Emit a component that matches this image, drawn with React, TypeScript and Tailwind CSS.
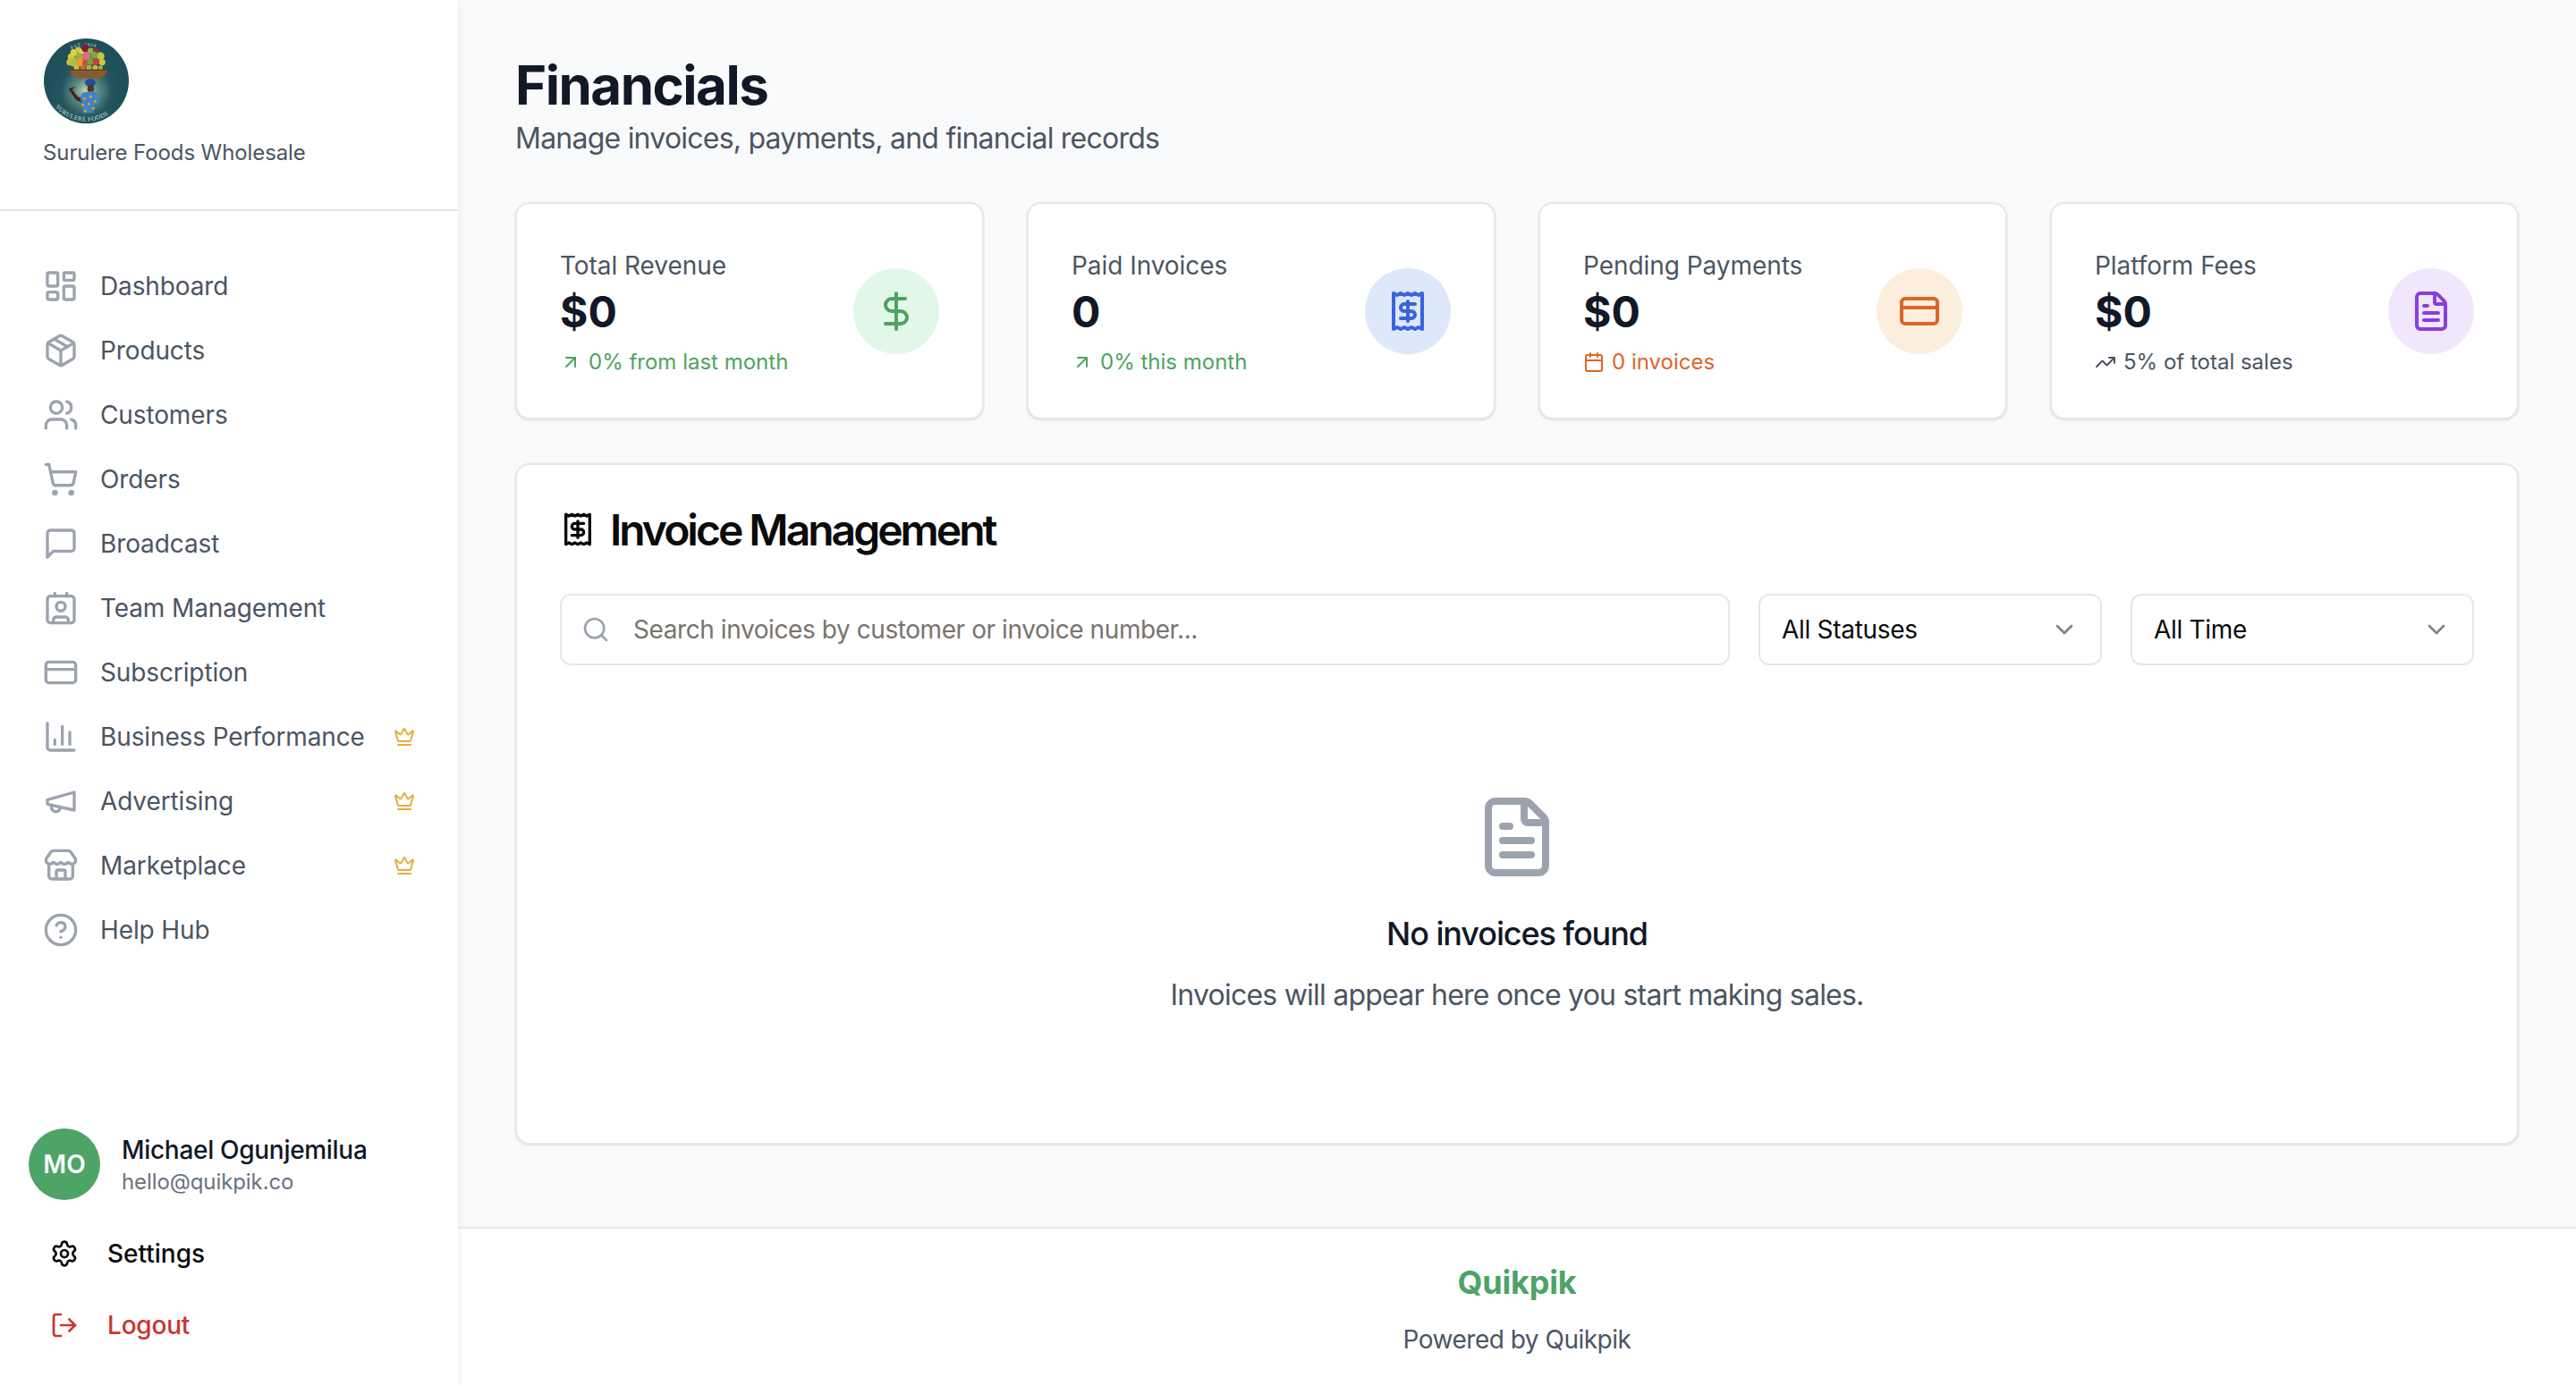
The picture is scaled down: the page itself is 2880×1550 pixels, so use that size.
import React from "react";
import {
  LayoutDashboard,
  Package,
  Users,
  ShoppingCart,
  Contact,
  CreditCard,
  ChartColumn,
  Store,
  CircleHelp,
  Crown,
  Settings,
  LogOut,
  DollarSign,
  Receipt,
  FileText,
  ArrowUpRight,
  Calendar,
  TrendingUp,
  Search,
  ChevronDown,
} from "lucide-react";

function MessageIcon({ className }: { className?: string }) {
  return (
    <svg className={className} viewBox="0 0 24 24" fill="none" stroke="currentColor" strokeWidth={2} strokeLinecap="round" strokeLinejoin="round">
      <path d="M21 15a2 2 0 0 1-2 2H7l-4 4V5a2 2 0 0 1 2-2h14a2 2 0 0 1 2 2z" />
    </svg>
  );
}

function MegaphoneIcon({ className }: { className?: string }) {
  return (
    <svg className={className} viewBox="0 0 24 24" fill="none" stroke="currentColor" strokeWidth={2} strokeLinecap="round" strokeLinejoin="round">
      <path d="m3 11 18-5v12L3 14v-3z" />
      <path d="M11.6 16.8a3 3 0 1 1-5.8-1.6" />
    </svg>
  );
}

// the shop's round logo, drawn by hand
function Logo() {
  const fruits: [number, number, number, string][] = [
    [29, 27, 3.5, "#c9c23c"], [31, 21, 4, "#d9c53a"], [34, 16, 4, "#e3cf45"], [39, 13, 3.5, "#c9c23c"], [43, 15, 3.5, "#e4d24e"],
    [34, 27, 5, "#a9c23f"], [40, 21, 4.5, "#8fb548"], [47, 11, 4.5, "#7c1f2a"], [53, 14, 3.5, "#8fb548"], [59, 14, 3.5, "#9a2b3a"],
    [64, 20, 4.5, "#b7cf3f"], [57, 19, 4, "#77a845"], [48, 20, 5, "#dd6f78"], [41, 27, 4.5, "#ee9a35"], [47, 28, 3.5, "#c4543a"],
    [53, 26, 4, "#7aa03a"], [59, 26, 4, "#b5464a"], [66, 27, 3.5, "#d8c63d"], [37, 33, 3, "#c7c23c"], [44, 33, 3, "#b5782f"],
    [51, 33, 3, "#a7b83e"], [58, 33, 3, "#d9b33b"], [64, 33, 2.6, "#9ab43f"],
  ];
  const dots: [number, number][] = [[46, 68], [53, 66], [58, 71], [44, 75], [51, 74], [56, 79], [47, 82]];
  return (
    <svg className="ml-px h-[95px] w-[95px]" viewBox="0 0 96 96">
      <defs>
        <radialGradient id="logoGlow" cx="48" cy="60" r="44" gradientUnits="userSpaceOnUse">
          <stop offset="0" stopColor="#c9dab8" />
          <stop offset="0.3" stopColor="#5e8d84" />
          <stop offset="0.65" stopColor="#24555e" />
          <stop offset="1" stopColor="#1f4f58" />
        </radialGradient>
        <path id="logoTop" d="M 20 20 A 40 40 0 0 1 76 20" />
        <path id="logoBottom" d="M 10 73 A 45.5 45.5 0 0 0 86 73" />
      </defs>
      <circle cx="48" cy="48" r="48" fill="url(#logoGlow)" />
      <text fontFamily="Liberation Serif, serif" fontSize="5.500" fill="#cfe0d8" letterSpacing="0.6">
        <textPath href="#logoTop" startOffset="22%">EST. 2024</textPath>
      </text>
      <text fontFamily="Liberation Serif, serif" fontSize="7" fill="#cfe0d8" letterSpacing="0.4">
        <textPath href="#logoBottom" startOffset="6%">SURULERE FOODS</textPath>
      </text>
      {fruits.map(([cx, cy, r, fill], i) => (
        <circle key={i} cx={cx} cy={cy} r={r} fill={fill} />
      ))}
      <path d="M29 35h43c-1 6-6 9-12 10H41c-6-1-11-4-12-10z" fill="#8a5a2e" />
      <path d="M29 35h43v1.5H29z" fill="#5f3d20" />
      <ellipse cx="52.5" cy="50" rx="6" ry="4.5" fill="#1f4fa0" />
      <ellipse cx="53" cy="57" rx="3.8" ry="4.6" fill="#5a3020" />
      <path d="M28 57l3-1.500 5-1-4 3 6 8 5 2v5l-7-3z" fill="#4a2418" />
      <path d="M43 62c5-2 12-3 16-1 3 2 4 8 3 13l-5 1-1 9H44l0-11-3-4z" fill="#3d86c6" />
      {dots.map(([cx, cy], i) => (
        <circle key={i} cx={cx} cy={cy} r="1.500" fill="#e39a35" />
      ))}
    </svg>
  );
}

const navItems = [
  { label: "Dashboard", icon: LayoutDashboard },
  { label: "Products", icon: Package },
  { label: "Customers", icon: Users },
  { label: "Orders", icon: ShoppingCart },
  { label: "Broadcast", icon: MessageIcon },
  { label: "Team Management", icon: Contact },
  { label: "Subscription", icon: CreditCard },
  { label: "Business Performance", icon: ChartColumn, premium: true },
  { label: "Advertising", icon: MegaphoneIcon, premium: true },
  { label: "Marketplace", icon: Store, premium: true },
  { label: "Help Hub", icon: CircleHelp },
];

const stats = [
  {
    label: "Total Revenue",
    value: "$0",
    note: "0% from last month",
    noteIcon: ArrowUpRight,
    noteColor: "text-[#4ea35f]",
    icon: DollarSign,
    iconColor: "text-[#4ea35f]",
    circle: "bg-[#e1f8e9]",
  },
  {
    label: "Paid Invoices",
    value: "0",
    note: "0% this month",
    noteIcon: ArrowUpRight,
    noteColor: "text-[#4ea35f]",
    icon: Receipt,
    iconColor: "text-[#3a63de]",
    circle: "bg-[#dde8fb]",
  },
  {
    label: "Pending Payments",
    value: "$0",
    note: "0 invoices",
    noteIcon: Calendar,
    noteColor: "text-[#dd6528]",
    icon: CreditCard,
    iconColor: "text-[#dd6528]",
    circle: "bg-[#fceedd]",
  },
  {
    label: "Platform Fees",
    value: "$0",
    note: "5% of total sales",
    noteIcon: TrendingUp,
    noteColor: "text-[#4b5563]",
    icon: FileText,
    iconColor: "text-[#8a3de0]",
    circle: "bg-[#f0e7fc]",
  },
];

function Sidebar() {
  return (
    <aside className="relative z-10 flex h-[1550px] w-[512px] shrink-0 flex-col bg-white shadow-[2px_0_8px_rgba(0,0,0,0.05)]">
      <div className="h-[236px] border-b-2 border-[#e5e7eb] px-12 pt-[43px]">
        <Logo />
        <p className="mt-[17px] text-[24px] leading-[32px] tracking-[-0.1px] text-[#4b5563]">Surulere Foods Wholesale</p>
      </div>
      <nav className="flex flex-col pt-12">
        {navItems.map((item) => {
          const Icon = item.icon;
          return (
            <div key={item.label} className="flex h-[72px] items-center gap-6 px-12 text-[28px] tracking-[-0.12px] text-[#4b5563]">
              <Icon className="h-10 w-10 shrink-0 text-[#9ca3af]" />
              <span className="flex-1">{item.label}</span>
              {item.premium && <Crown className="h-6 w-6 text-[#e5ae37]" />}
            </div>
          );
        })}
      </nav>
      <div className="mt-auto flex flex-col px-8 pb-[28px]">
        <div className="mb-[20px] flex items-center gap-6">
          <div className="flex h-20 w-20 items-center justify-center rounded-full bg-[#4ea366] text-[28px] font-semibold text-white">MO</div>
          <div>
            <p className="text-[28px] leading-[40px] font-medium tracking-[-0.3px] text-[#111827]">Michael Ogunjemilua</p>
            <p className="text-[24px] leading-[32px] tracking-[-0.1px] text-[#6b7280]">hello@quikpik.co</p>
          </div>
        </div>
        <div className="flex h-20 items-center gap-8 pl-6 text-[28px] font-medium text-[#0a0a0a]">
          <Settings className="h-8 w-8" />
          <span>Settings</span>
        </div>
        <div className="flex h-20 items-center gap-8 pl-6 text-[28px] font-medium tracking-[-0.2px] text-[#c9352f]">
          <LogOut className="h-8 w-8" />
          <span>Logout</span>
        </div>
      </div>
    </aside>
  );
}

function StatCard({ stat }: { stat: (typeof stats)[number] }) {
  const Icon = stat.icon;
  const NoteIcon = stat.noteIcon;
  return (
    <div className="flex h-[243px] items-center justify-between rounded-2xl border-2 border-[#e5e7eb] bg-white px-12 shadow-sm">
      <div className="pt-[2px]">
        <p className="text-[28px] leading-[40px] tracking-[-0.05px] text-[#4b5563]">{stat.label}</p>
        <p className="text-[48px] leading-[64px] font-bold text-[#111827]">{stat.value}</p>
        <div className={`mt-[8px] flex items-center gap-2 text-[24px] leading-[32px] ${stat.noteColor}`}>
          <NoteIcon className="h-6 w-6" />
          <span>{stat.note}</span>
        </div>
      </div>
      <div className={`flex h-24 w-24 items-center justify-center rounded-full ${stat.circle}`}>
        <Icon className={`h-12 w-12 ${stat.iconColor}`} />
      </div>
    </div>
  );
}

function SelectBox({ label }: { label: string }) {
  return (
    <div className="flex h-20 w-[384px] items-center justify-between rounded-xl border-2 border-[#e5e7eb] bg-white px-6 text-[28px] tracking-[-0.3px] text-[#0a0a0a]">
      <span>{label}</span>
      <ChevronDown className="h-8 w-8 text-[#0a0a0a] opacity-50" />
    </div>
  );
}

export default function App() {
  return (
    <div className="flex h-[1550px] w-[2880px] overflow-hidden bg-[#f9fafb] font-['Inter',sans-serif]">
      <Sidebar />
      <main className="flex min-w-0 flex-1 flex-col">
        <div className="flex-1 px-16 pt-[59px]">
          <h1 className="text-[60px] leading-[72px] font-bold tracking-[-1.5px] text-[#111827]">Financials</h1>
          <p className="text-[32px] leading-[48px] tracking-[-0.77px] text-[#4b5563]">Manage invoices, payments, and financial records</p>
          <div className="mt-[47px] grid grid-cols-4 gap-12">
            {stats.map((stat) => (
              <StatCard key={stat.label} stat={stat} />
            ))}
          </div>
          <section className="mt-[49px] h-[762px] rounded-2xl border-2 border-[#e5e7eb] bg-white p-12 shadow-sm">
            <div className="flex items-center gap-4">
              <Receipt className="h-10 w-10 text-[#0a0a0a]" />
              <h2 className="relative top-[1px] text-[48px] leading-[48px] font-semibold tracking-[-3px] text-[#0a0a0a]">Invoice Management</h2>
            </div>
            <div className="mt-12 flex gap-8">
              <div className="flex h-20 flex-1 items-center gap-[26px] rounded-xl border-2 border-[#e5e7eb] bg-white pl-[22px] pr-6">
                <Search className="h-8 w-8 text-[#9ca3af]" />
                <span className="text-[28px] tracking-[-0.42px] text-[#78746f]">Search invoices by customer or invoice number...</span>
              </div>
              <SelectBox label="All Statuses" />
              <SelectBox label="All Time" />
            </div>
            <div className="flex flex-col items-center pt-[144px]">
              <FileText className="h-24 w-24 text-[#9ca3af]" />
              <p className="mt-[32px] text-[36px] leading-[56px] font-medium tracking-[-1.1px] text-[#111827]">No invoices found</p>
              <p className="mt-[17px] text-[32px] leading-[48px] tracking-[-0.77px] text-[#4b5563]">Invoices will appear here once you start making sales.</p>
            </div>
          </section>
        </div>
        <footer className="flex h-[178px] flex-col items-center border-t-2 border-[#e5e7eb] bg-white pt-[32px]">
          <p className="text-[36px] leading-[56px] font-bold tracking-[-0.2px] text-[#4ea366]">Quikpik</p>
          <p className="mt-[16px] text-[28px] leading-[40px] tracking-[-0.5px] text-[#4b5563]">Powered by Quikpik</p>
        </footer>
      </main>
    </div>
  );
}
